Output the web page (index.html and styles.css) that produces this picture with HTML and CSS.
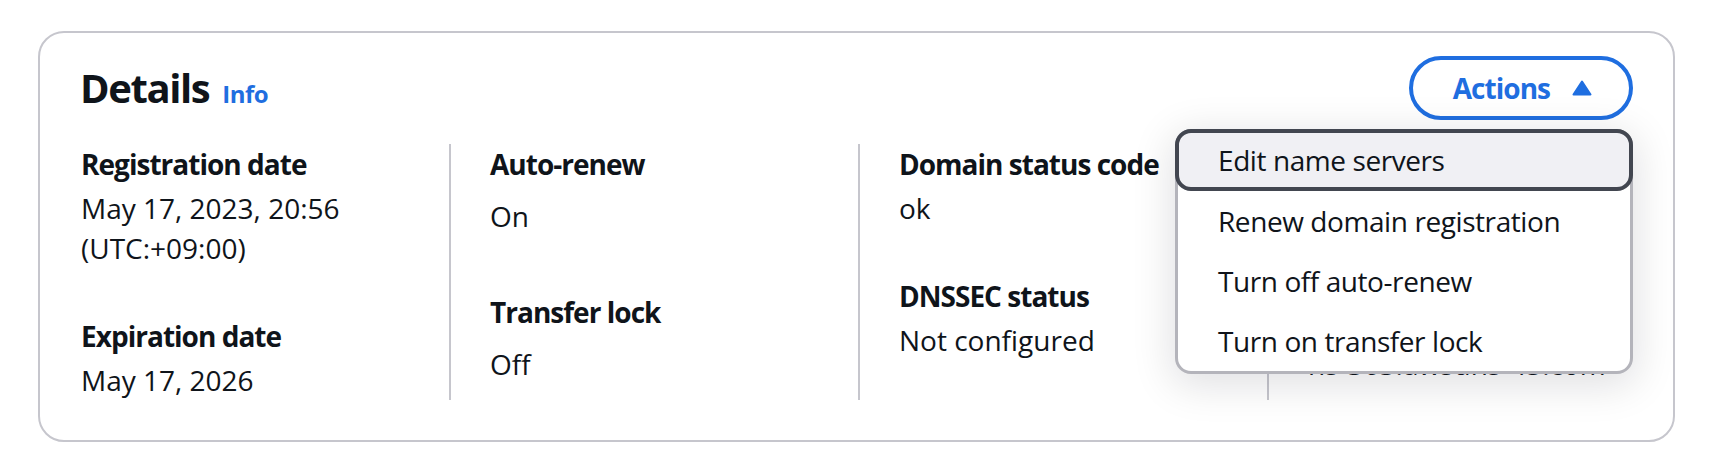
FILE: index.html
```html
<!DOCTYPE html>
<html lang="en">
<head>
<meta charset="utf-8">
<title>Details</title>
<link rel="stylesheet" href="styles.css">
</head>
<body>
<div class="page">
  <section class="card">
    <header class="card-header">
      <div class="title">
        <h2>Details</h2>
        <a class="info" href="#">Info</a>
      </div>
      <div class="actions">
        <button class="btn" type="button">
          <span>Actions</span>
          <svg class="caret" width="20" height="16" viewBox="0 0 20 16" aria-hidden="true"><path d="M10 1.5 L18.5 14.5 H1.5 Z" fill="currentColor" stroke="currentColor" stroke-width="2" stroke-linejoin="round"/></svg>
        </button>
        <ul class="menu">
          <li class="item active">Edit name servers</li>
          <li class="item">Renew domain registration</li>
          <li class="item">Turn off auto-renew</li>
          <li class="item">Turn on transfer lock</li>
        </ul>
      </div>
    </header>
    <div class="columns">
      <div class="col">
        <div class="pair">
          <div class="label">Registration date</div>
          <div class="value">May 17, 2023, 20:56 (UTC:+09:00)</div>
        </div>
        <div class="pair">
          <div class="label">Expiration date</div>
          <div class="value">May 17, 2026</div>
        </div>
      </div>
      <div class="col">
        <div class="pair">
          <div class="label">Auto-renew</div>
          <div class="value status">On</div>
        </div>
        <div class="pair">
          <div class="label">Transfer lock</div>
          <div class="value status">Off</div>
        </div>
      </div>
      <div class="col">
        <div class="pair">
          <div class="label">Domain status code</div>
          <div class="value">ok</div>
        </div>
        <div class="pair">
          <div class="label">DNSSEC status</div>
          <div class="value">Not configured</div>
        </div>
      </div>
      <div class="col">
        <div class="pair">
          <div class="label">Name servers</div>
          <ul class="ns-list value">
            <li>ns-1268.awsdns-30.org</li>
            <li>ns-1812.awsdns-34.uk</li>
            <li>ns-681.awsdns-21.net</li>
            <li>ns-363.awsdns-45.com</li>
          </ul>
        </div>
      </div>
    </div>
  </section>
</div>
</body>
</html>
```

FILE: styles.css
```css
* {
  box-sizing: border-box;
}

html,
body {
  margin: 0;
  background: #ffffff;
}

body {
  font-family: "Open Sans", "Noto Sans", sans-serif;
  color: #0f141a;
}

.page {
  padding: 31px 43px 0 38px;
}

.card {
  background: #ffffff;
  border: 2px solid #c6c6cd;
  border-radius: 26px;
  padding: 23px 40px 40px;
}

.card-header {
  display: flex;
  align-items: center;
  justify-content: space-between;
  height: 64px;
}

.title {
  display: flex;
  align-items: baseline;
  gap: 13px;
}

.title h2 {
  margin: 0;
  font-size: 40px;
  line-height: 48px;
  font-weight: 700;
  letter-spacing: -0.035em;
}

.info {
  font-size: 24px;
  font-weight: 700;
  color: #1f6ee0;
  text-decoration: none;
  letter-spacing: -0.02em;
}

.actions {
  position: relative;
}

.btn {
  display: flex;
  align-items: center;
  gap: 22px;
  height: 64px;
  padding: 0 37px 0 40px;
  border: 4px solid #1f6ee0;
  border-radius: 32px;
  background: #ffffff;
  color: #1f6ee0;
  font-family: "Open Sans", "Noto Sans", sans-serif;
  font-size: 28px;
  line-height: 40px;
  font-weight: 700;
  letter-spacing: -0.035em;
}

.caret {
  display: block;
}

.menu {
  position: absolute;
  top: calc(100% + 9px);
  right: 0;
  z-index: 2;
  width: 458px;
  margin: 0;
  padding: 0;
  list-style: none;
  background: #ffffff;
  border: 3px solid #b4b4bb;
  border-radius: 16px;
  box-shadow: 0 8px 40px 4px rgba(0, 7, 22, 0.12);
}

.item {
  display: flex;
  align-items: center;
  height: 60px;
  padding: 0 40px;
  font-size: 28px;
  line-height: 40px;
  letter-spacing: -0.015em;
}

.item.active {
  height: 62px;
  margin: -3px -3px 0;
  padding-left: 39px;
  background: #f0f0f4;
  border: 4px solid #424650;
  border-radius: 16px;
}

.columns {
  display: grid;
  grid-template-columns: repeat(4, 1fr);
  margin: 24px -43px 0 -40px;
}

.col {
  display: flex;
  flex-direction: column;
  gap: 48px;
  padding-left: 41px;
}

.col + .col {
  border-left: 2px solid #c6c6cd;
  padding-left: 39px;
}

.pair {
  display: flex;
  flex-direction: column;
  gap: 4px;
}

.label {
  font-size: 28px;
  line-height: 40px;
  font-weight: 700;
  letter-spacing: -0.035em;
}

.value {
  font-size: 28px;
  line-height: 40px;
}

.value.status {
  padding: 8px 0;
}

.ns-list {
  display: flex;
  flex-direction: column;
  gap: 12px;
  margin: 0;
  padding: 0;
  list-style: none;
}
```
